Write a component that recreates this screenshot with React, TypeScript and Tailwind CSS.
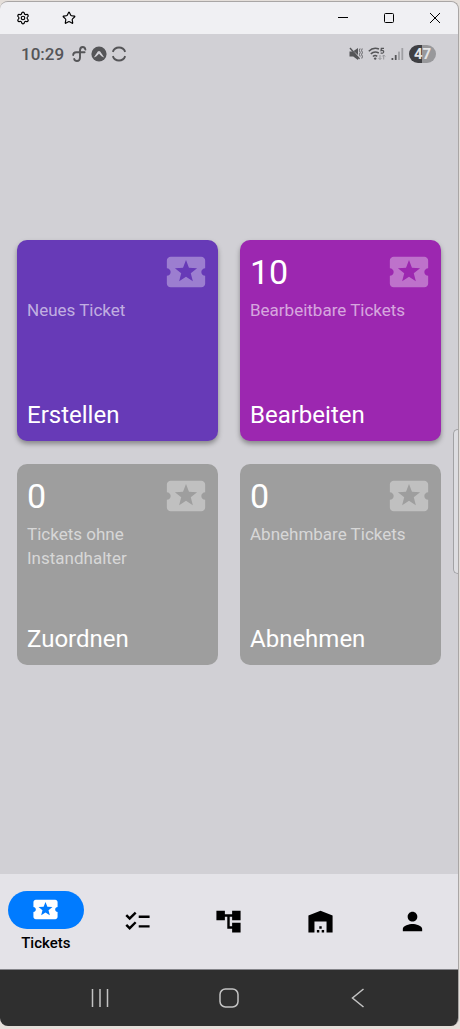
import React, { useState } from 'react'
import { Settings, Star } from 'lucide-react'
import {
  MdAccountTree,
  MdChecklist,
  MdLocalActivity,
  MdPerson,
  MdWarehouse,
} from 'react-icons/md'

interface TicketCardProps {
  count?: number
  subtitle: string
  title: string
  color: string
}

const cards: TicketCardProps[] = [
  { subtitle: 'Neues Ticket', title: 'Erstellen', color: 'bg-[#673ab7] shadow-[0_3px_5px_rgba(0,0,0,0.35)]' },
  { count: 10, subtitle: 'Bearbeitbare Tickets', title: 'Bearbeiten', color: 'bg-[#9c27b0] shadow-[0_3px_5px_rgba(0,0,0,0.35)]' },
  { count: 0, subtitle: 'Tickets ohne Instandhalter', title: 'Zuordnen', color: 'bg-[#9e9e9e]' },
  { count: 0, subtitle: 'Abnehmbare Tickets', title: 'Abnehmen', color: 'bg-[#9e9e9e]' },
]

const tabs = [
  { label: 'Tickets', Icon: MdLocalActivity },
  { label: 'Aufgaben', Icon: MdChecklist },
  { label: 'Struktur', Icon: MdAccountTree },
  { label: 'Lager', Icon: MdWarehouse },
  { label: 'Profil', Icon: MdPerson },
]

const titleButton = 'flex h-8 w-[46px] items-center justify-center text-black'

const TitleBar: React.FC = () => (
  <header className="flex h-8 bg-[#f0f0f3]">
    <button type="button" aria-label="Settings" className={titleButton}>
      <Settings size={14} strokeWidth={2} />
    </button>
    <button type="button" aria-label="Favorite" className={titleButton}>
      <Star size={14} strokeWidth={2} />
    </button>
    <div className="flex-1" />
    <button type="button" aria-label="Minimize" className={titleButton}>
      <svg width="12" height="12" viewBox="0 0 12 12" stroke="currentColor">
        <path d="M1 5.5h10" />
      </svg>
    </button>
    <button type="button" aria-label="Maximize" className={titleButton}>
      <svg width="12" height="12" viewBox="0 0 12 12" fill="none" stroke="currentColor">
        <rect x="1.5" y="1.5" width="9" height="9" rx="1" />
      </svg>
    </button>
    <button type="button" aria-label="Close" className={titleButton}>
      <svg width="12" height="12" viewBox="0 0 12 12" stroke="currentColor">
        <path d="M1 1l10 10M11 1L1 11" />
      </svg>
    </button>
  </header>
)

const StatusBar: React.FC = () => (
  <div className="flex h-10 items-center justify-between pr-[22px] pl-[21px] text-[#555558]">
    <div className="flex items-center gap-1">
      <span className="mr-1 text-[17px] leading-6 font-medium">10:29</span>
      <svg width="15" height="16" viewBox="0 0 15 16" fill="none" stroke="currentColor" strokeWidth="1.9" strokeLinecap="round">
        <path d="M13.4 3.6C13 1.9 12 1 10.8 1C9 1 8 2.3 8 4.5V11.5C8 13.7 6.900 15 5 15C3.500 15 2.500 14.200 2.200 13" />
        <path d="M1.200 9.100C1.200 7.200 2.300 6.200 4.300 6.200H12.600" />
      </svg>
      <svg width="16" height="16" viewBox="0 0 16 16">
        <circle cx="8" cy="8" r="7.6" fill="currentColor" />
        <path d="M2.800 11.600L6.800 5.600Q8 4.200 9.200 5.600L13.200 11.600L10.800 10.400L8 7.800L5.200 10.400Z" fill="#d1d0d5" />
        <path d="M5 13.600L8 9L11 13.600" fill="currentColor" />
      </svg>
      <svg width="16" height="16" viewBox="0 0 16 16" fill="none" stroke="currentColor" strokeWidth="1.9">
        <path d="M1.800 5.800A6.600 6.600 0 0 1 14.200 5.800" />
        <path d="M14.200 10.200A6.600 6.600 0 0 1 1.800 10.200" />
      </svg>
    </div>
    <div className="flex items-center gap-[5px]">
      <svg width="14" height="14" viewBox="0 0 14 14" fill="currentColor">
        <path d="M0.500 4.500H3.200L9 10V13L4.200 9.500H0.500Z" />
        <path d="M4.600 4L9 1V8Z" />
        <path d="M1 1L10.500 12" stroke="currentColor" strokeWidth="1.400" />
        <path d="M11 1.500L10.400 3.500L11.200 5.500L10.400 7.500L11.200 9.500M13.200 1.500L12.600 3.500L13.400 5.500L12.600 7.500L13.400 9.500L12.800 11.500" fill="none" stroke="currentColor" strokeWidth="0.900" />
      </svg>
      <svg width="18" height="14" viewBox="0 0 18 14" fill="none" stroke="currentColor" strokeWidth="1.5">
        <path d="M0.800 4.200C3.500 1.400 7.500 0.700 11 2" />
        <path d="M2.800 6.900C5 4.800 8.200 4.500 10.800 6" />
        <path d="M4.900 9.500C6.200 8.400 8 8.400 9.200 9.400" />
        <circle cx="7.200" cy="11.600" r="1.200" fill="currentColor" stroke="none" />
        <path d="M16 1.300H13.300L13 3.600C14.500 3.100 15.900 3.700 15.700 5C15.500 6.300 13.800 6.600 12.700 5.800" strokeWidth="1.200" />
        <path d="M12 8V12.500M10.500 11L12 12.500L13.500 11M15.700 12.500V8M14.200 9.500L15.700 8L17.200 9.500" stroke="#97979b" strokeWidth="1" />
      </svg>
      <svg width="13" height="14" viewBox="0 0 13 14" fill="currentColor">
        <rect x="0.500" y="11" width="1.800" height="2" rx="0.500" />
        <rect x="3.800" y="8" width="1.800" height="5" rx="0.500" />
        <rect x="7.100" y="4.500" width="1.800" height="8.500" rx="0.500" opacity="0.4" />
        <rect x="10.400" y="1" width="1.800" height="12" rx="0.500" opacity="0.4" />
      </svg>
      <span className="flex h-[18px] w-[27px] items-center justify-center rounded-full bg-linear-to-r from-[#3f3f43] from-47% to-[#98989b] to-47% text-[15px] leading-4 font-bold text-[#e4e4e6]">
        47
      </span>
    </div>
  </div>
)

const TicketCard: React.FC<TicketCardProps> = ({ count, subtitle, title, color }) => (
  <button
    type="button"
    className={`flex aspect-square flex-col rounded-[10px] pt-[9px] pr-[9px] pb-[10px] pl-[10px] text-left text-white ${color}`}
  >
    <span className="flex h-[46px] w-full items-center justify-between">
      <span className="text-[34px] leading-10">{count}</span>
      <MdLocalActivity size={46} className="text-white/35" />
    </span>
    <span className="mt-[3px] text-[17px] leading-6 text-white/60">{subtitle}</span>
    <span className="mt-auto text-2xl leading-8">{title}</span>
  </button>
)

const SystemNav: React.FC = () => (
  <div className="grid h-14 grid-cols-3 bg-[#2f2f2f] px-9 text-[#c4c4c4]">
    <button type="button" aria-label="Recent apps" className="flex items-center justify-center">
      <svg width="20" height="20" viewBox="0 0 20 20" stroke="currentColor" strokeWidth="1.5">
        <path d="M2.500 1V19M10 1V19M17.500 1V19" />
      </svg>
    </button>
    <button type="button" aria-label="Home" className="flex items-center justify-center">
      <svg width="20" height="20" viewBox="0 0 20 20" fill="none" stroke="currentColor" strokeWidth="1.5">
        <rect x="1" y="1" width="18" height="18" rx="5.5" />
      </svg>
    </button>
    <button type="button" aria-label="Back" className="flex items-center justify-center">
      <svg width="14" height="20" viewBox="0 0 14 20" fill="none" stroke="currentColor" strokeWidth="1.5">
        <path d="M12.500 1L1.500 10L12.500 19" />
      </svg>
    </button>
  </div>
)

const App: React.FC = () => {
  const [active, setActive] = useState('Tickets')

  return (
    <div className="flex min-h-screen flex-col bg-[#e5dfda] pt-px pr-px pb-[3px] font-[Roboto,sans-serif]">
      <div className="relative flex flex-1 flex-col overflow-hidden rounded-lg border-t border-r border-[#a9a6a5] bg-[#d1d0d5]">
        <TitleBar />
        <StatusBar />

        <main className="flex flex-1 flex-col justify-center px-[17px] pb-11">
          <div className="grid grid-cols-2 gap-x-[22px] gap-y-[23px]">
            {cards.map((card) => (
              <TicketCard key={card.title} {...card} />
            ))}
          </div>
        </main>

        <nav className="grid h-24 grid-cols-5 border-b border-[#85858a] bg-[#e4e3e8] text-black">
          {tabs.map(({ label, Icon }) => (
            <button
              key={label}
              type="button"
              aria-label={label}
              onClick={() => setActive(label)}
              className="flex flex-col items-center justify-center gap-1"
            >
              {active === label ? (
                <>
                  <span className="flex h-[38px] w-[76px] items-center justify-center rounded-full bg-[#007bff] text-white">
                    <Icon size={29} />
                  </span>
                  <span className="text-[15px] leading-5 font-medium">{label}</span>
                </>
              ) : (
                <Icon size={29} />
              )}
            </button>
          ))}
        </nav>
        <SystemNav />

        {/* edge panel handle */}
        <div className="absolute top-[427px] right-0 h-[145px] w-[5px] rounded-l-md border border-r-0 border-[#a2a2a5] bg-[#dddde1]" />
      </div>
    </div>
  )
}

export default App
